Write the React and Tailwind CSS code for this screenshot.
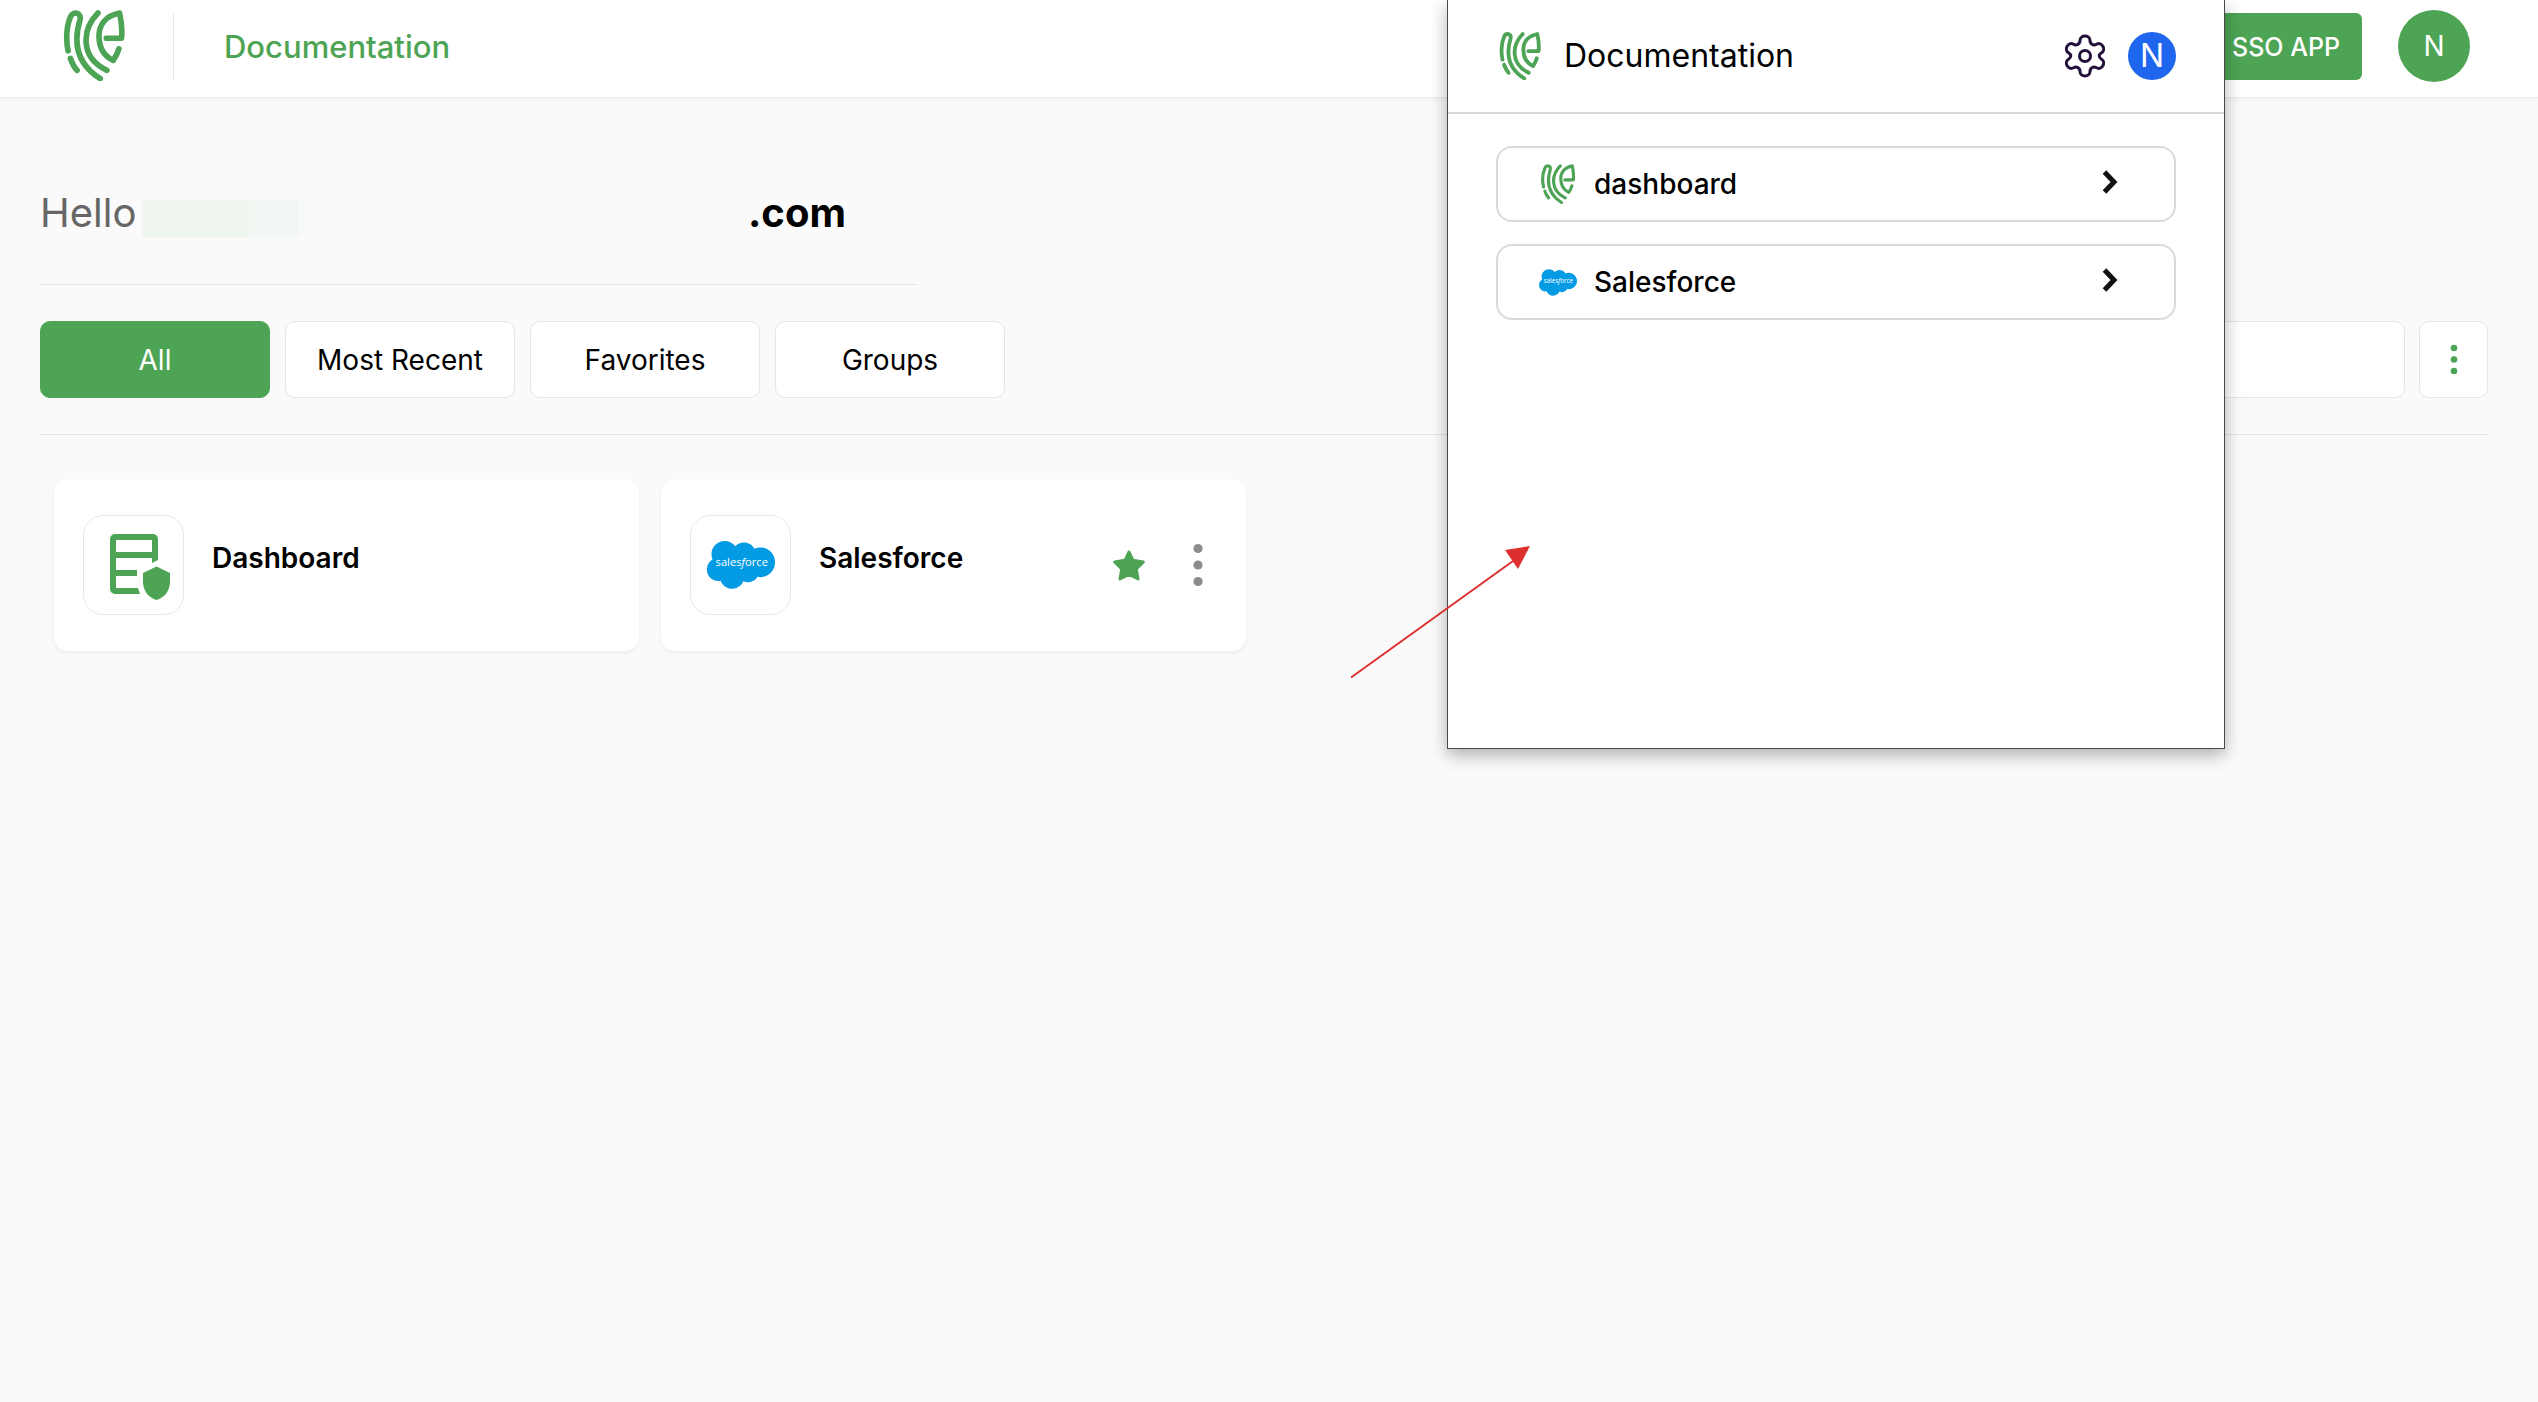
import { useState } from 'react'

const TABS = ['All', 'Most Recent', 'Favorites', 'Groups']

function Logo({ className }) {
  return (
    <svg viewBox="39 29 184 214" className={className} fill="none" stroke="#4da454" strokeWidth="17" strokeLinecap="round" strokeLinejoin="round" aria-hidden="true">
      <path d="M53 152C46 122 47 78 61 48C68 32 94 36 89 58C67 130 80 192 150 236" />
      <path d="M60 175C65 189 71 201 80 211" />
      <path d="M143 38C94 88 88 172 170 211" />
      <path d="M168 114H214C217 85 213 60 208 38C166 46 145 74 146 110C147 144 162 168 189 181C196 171 202 160 206 146" />
    </svg>
  )
}

function SalesforceLogo({ className }) {
  return (
    <svg viewBox="0 0 256 180" className={className} role="img" aria-label="Salesforce logo">
      <path
        fill="#049be5"
        d="M106.6 19.7C114.8 11 126.3 5.7 139 5.7c16.9 0 31.6 9.4 39.4 23.4 6.8-3 14.4-4.8 22.3-4.8 30.5 0 55.2 24.9 55.2 55.6s-24.7 55.6-55.2 55.6c-3.7 0-7.3-.3-10.8-1-6.9 12.3-20.1 20.6-35.2 20.6-6.3 0-12.3-1.4-17.6-4-7 16.4-23.4 28-42.4 28-19.8 0-36.7-12.5-43.1-30.1-2.9.6-5.8.9-8.8.9C19.2 149.9.1 130.6.1 106.8c0-16 8.6-29.9 21.3-37.4-2.6-6-4.1-12.7-4.1-19.7C17.3 22.3 39.6.1 67 .1c16.1 0 30.4 7.7 39.6 19.6"
      />
      <text x="131" y="95" textAnchor="middle" fill="#fff" fontSize="42" className="font-['Open_Sans',sans-serif] font-medium">
        sales<tspan fontStyle="italic">f</tspan>orce
      </text>
    </svg>
  )
}

function ServerShieldIcon() {
  return (
    <svg viewBox="0 0 60 66" className="w-[60px] h-[66px]" fill="#4da454" aria-hidden="true">
      <path fillRule="evenodd" d="M5 0H43a5 5 0 0 1 5 5V26L42 29V24H6V36H27V42H6V54H28L30 60H5a5 5 0 0 1-5-5V5a5 5 0 0 1 5-5ZM6 6H42V18H6Z" />
      <path d="M46.500 32.500L60 39V48C60 57 54 64 46.500 66C39 64 33 57 33 48V39Z" />
    </svg>
  )
}

function StarIcon() {
  return (
    <svg viewBox="0 0 32 31" className="w-8 h-[31px]" fill="#4da454" stroke="#4da454" strokeWidth="3" strokeLinejoin="round" aria-hidden="true">
      <path d="M16 2L20 10.300L30.300 12L23.300 19L25 29L16 24.500L7 29L8.700 19L1.700 12L12 10.300Z" />
    </svg>
  )
}

function GearIcon() {
  return (
    <svg viewBox="0 0 40 44" className="w-10 h-11" fill="none" stroke="#24103a" strokeWidth="3" strokeLinejoin="round" aria-hidden="true">
      <path d="M15 6.500C15 0.500 25 0.500 25 6.500C25 10 28.500 12 31.500 10.200C36.700 7.300 41.600 15.700 36.500 18.800C33.500 20.600 33.500 23.400 36.500 25.200C41.600 28.300 36.700 36.700 31.500 33.800C28.500 32 25 34 25 37.500C25 43.500 15 43.500 15 37.500C15 34 11.500 32 8.500 33.800C3.300 36.700 -1.600 28.300 3.500 25.200C6.500 23.400 6.500 20.600 3.500 18.800C-1.600 15.700 3.300 7.300 8.500 10.200C11.500 12 15 10 15 6.500Z" />
      <circle cx="20" cy="22" r="5.500" />
    </svg>
  )
}

function ChevronIcon() {
  return (
    <svg viewBox="0 0 16 24" className="w-4 h-6" fill="none" stroke="#111" strokeWidth="5" aria-hidden="true">
      <path d="M2.500 2L12 12L2.500 22" />
    </svg>
  )
}

function AppCard({ name, icon, children }) {
  return (
    <article className="flex items-center h-[172px] pl-[29px] pr-[43px] bg-white rounded-[14px] shadow-[0_2px_4px_rgba(0,0,0,0.06)]">
      <div className="flex items-center justify-center shrink-0 w-[101px] h-[100px] border border-[#e8e8e8] rounded-[20px]">
        {icon}
      </div>
      <h2 className="ml-7 mb-[14px] flex-1 text-[28px] leading-9 font-semibold">{name}</h2>
      {children}
    </article>
  )
}

function PopupRow({ name, icon }) {
  return (
    <button type="button" className="flex items-center w-full h-[76px] px-10 border-2 border-[#d9d9df] rounded-2xl text-left">
      <span className="flex justify-center w-10 mr-4">{icon}</span>
      <span className="flex-1 text-[28px] leading-9 font-medium">{name}</span>
      <span className="mr-4 mb-1"><ChevronIcon /></span>
    </button>
  )
}

function ExtensionPopup() {
  return (
    <aside className="absolute top-0 right-[313px] w-[778px] h-[749px] bg-white border border-t-0 border-[#4a4a4a] shadow-[0_6px_16px_rgba(0,0,0,0.3)]">
      <header className="flex items-center h-[114px] px-12 border-b-2 border-[#d9d9df]">
        <Logo className="w-[42px] h-12 ml-[3px]" />
        <h2 className="ml-[23px] flex-1 text-[32px] leading-10">Documentation</h2>
        <button type="button" aria-label="Settings"><GearIcon /></button>
        <button type="button" className="ml-[23px] w-12 h-12 rounded-full bg-[#1f66ee] text-white text-[32px] leading-10">N</button>
      </header>
      <div className="flex flex-col gap-[22px] px-12 pt-8">
        <PopupRow name="dashboard" icon={<Logo className="w-[34px] h-10" />} />
        <PopupRow name="Salesforce" icon={<SalesforceLogo className="w-[38px] h-[27px]" />} />
      </div>
    </aside>
  )
}

export default function App() {
  const [tab, setTab] = useState('All')
  const [query, setQuery] = useState('')

  return (
    <div className="relative min-h-screen bg-[#fafafa] text-black font-['Inter','Liberation_Sans',sans-serif]">
      <header className="flex items-center h-[98px] pl-[63px] pr-[68px] bg-white border-b border-[#ececec] shadow-[0_2px_3px_rgba(0,0,0,0.03)]">
        <Logo className="w-[62px] h-[71px] mb-[6px]" />
        <div className="w-px h-[65px] ml-12 mb-[5px] bg-[#e5e5e5]" />
        <h1 className="ml-[50px] mb-1 flex-1 text-[31px] leading-10 font-medium text-[#4da454]">Documentation</h1>
        <button type="button" className="h-[67px] px-[22px] mb-1 rounded-md bg-[#4da454] text-white text-[25px] leading-8 font-medium">ADD SSO APP</button>
        <button type="button" className="w-[72px] h-[72px] ml-9 mb-[6px] rounded-full bg-[#4da454] text-white text-[28px] leading-9">N</button>
      </header>

      <main className="pl-10 pr-[50px]">
        <div className="flex items-start max-w-[877px] h-[187px] pt-[89px] border-b border-[#e5e5e5] text-[40px] leading-[52px]">
          <span className="w-[102px] text-[#666]">Hello</span>
          <span className="flex h-[37px] mt-[13px] mr-[400px]">
            <span className="w-[107px] bg-[#eff5ef]" />
            <span className="w-[50px] bg-[#f2f7f3]" />
            <span className="w-[49px] bg-[#f8faf8]" />
          </span>
          <span className="font-bold">.com</span>
        </div>

        <div className="flex justify-between py-9 border-b border-[#e5e5e5]">
          <nav className="flex gap-[15px]">
            {TABS.map(t => (
              <button
                key={t}
                type="button"
                onClick={() => setTab(t)}
                className={`w-[230px] h-[77px] rounded-[10px] border text-[28px] leading-9 ${
                  t === tab ? 'bg-[#4da454] border-[#4da454] text-white' : 'bg-white border-[#e5e5e5]'
                }`}
              >
                {t}
              </button>
            ))}
          </nav>
          <div className="flex gap-[14px]">
            <input
              type="search"
              aria-label="Search apps"
              value={query}
              onChange={e => setQuery(e.target.value)}
              className="w-[600px] h-[77px] px-6 bg-white border border-[#e5e5e5] rounded-[10px] text-[28px]"
            />
            <button type="button" aria-label="More options" className="flex items-center justify-center w-[69px] h-[77px] bg-white border border-[#e5e5e5] rounded-[10px]">
              <svg viewBox="0 0 8 32" className="w-2 h-8" fill="#4da454" aria-hidden="true">
                <circle cx="4" cy="4" r="3.300" />
                <circle cx="4" cy="15.500" r="3.300" />
                <circle cx="4" cy="27" r="3.300" />
              </svg>
            </button>
          </div>
        </div>

        <section className="grid grid-cols-4 gap-[22px] pl-[14px] pr-7 pt-11">
          <AppCard name="Dashboard" icon={<span className="ml-3 mt-1"><ServerShieldIcon /></span>} />
          <AppCard name="Salesforce" icon={<SalesforceLogo className="w-[70px] h-12" />}>
            <button type="button" aria-label="Favorite"><StarIcon /></button>
            <button type="button" aria-label="App options" className="ml-12">
              <svg viewBox="0 0 10 44" className="w-[10px] h-11" fill="#8c8c8c" aria-hidden="true">
                <circle cx="5" cy="5.500" r="4.600" />
                <circle cx="5" cy="22" r="4.600" />
                <circle cx="5" cy="38.500" r="4.600" />
              </svg>
            </button>
          </AppCard>
        </section>
      </main>

      <ExtensionPopup />

      <svg viewBox="0 0 184 136" className="absolute top-[544px] right-[1006px] w-[184px] h-[136px] pointer-events-none" aria-hidden="true">
        <path d="M3 133.500L172 12" stroke="#de2f2f" strokeWidth="2" />
        <path d="M157 6L182 2L170 25Z" fill="#de2f2f" />
      </svg>
    </div>
  )
}
